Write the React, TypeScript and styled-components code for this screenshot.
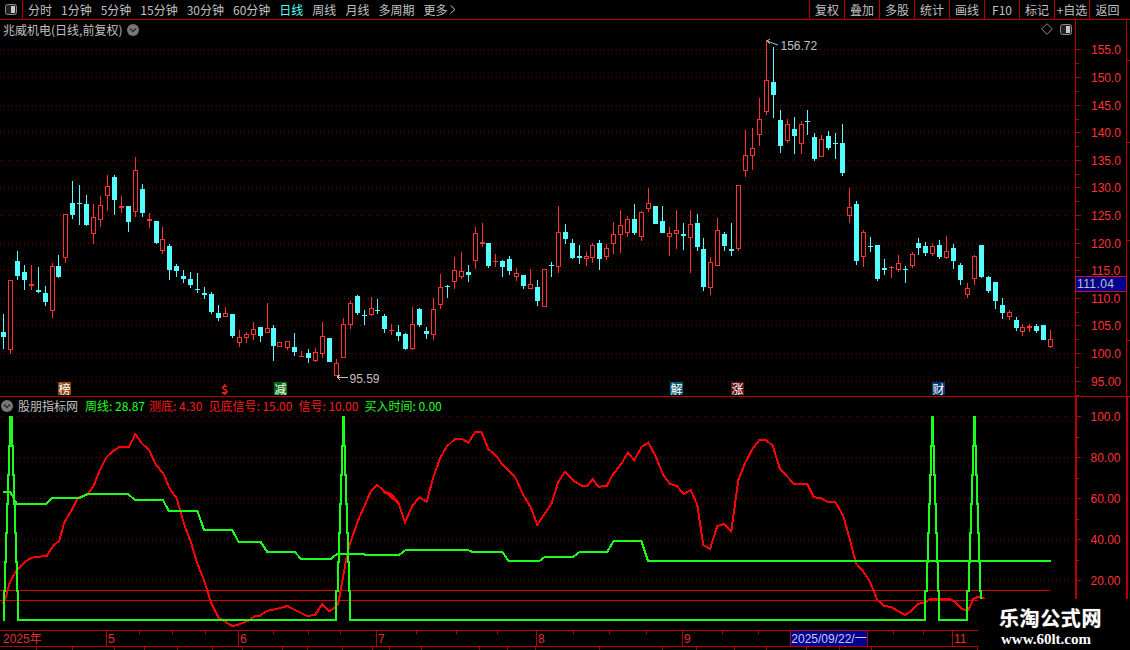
import React from "react";
import styled, { createGlobalStyle } from "styled-components";

const RED_LINE = "#b80000";
const CANDLE_RED = "#ff3232";
const CANDLE_CYAN = "#54ffff";
const GRID = "#6e0000";
const SANS = `"Liberation Sans", "Noto Sans CJK SC", sans-serif`;
const CJK = `"Noto Sans CJK SC", "Liberation Sans", sans-serif`;

const Global = createGlobalStyle`
  html, body { margin: 0; padding: 0; background: #000; }
  body { width: 1130px; height: 650px; overflow: hidden; font-family: ${CJK}; }
`;

const Page = styled.div`
  position: relative;
  width: 1130px;
  height: 650px;
  background: #000;
  display: flex;
  flex-direction: column;
  overflow: hidden;
`;

const Toolbar = styled.div`
  height: 19px;
  flex: none;
  display: flex;
  align-items: stretch;
  border-bottom: 1px solid ${RED_LINE};
  font: 12px/19px ${CJK};
  color: #c0c0c0;
`;
const ToggleCell = styled.div`
  width: 23px;
  flex: none;
  border-right: 1px solid ${RED_LINE};
  display: flex;
  align-items: center;
  justify-content: center;
  padding-right: 1px;
  box-sizing: border-box;
`;
const Periods = styled.div`
  display: flex;
  gap: 9px;
  padding-left: 5px;
  flex: 1;
`;
const Period = styled.span<{ $active?: boolean }>`
  color: ${(p) => (p.$active ? "#55ffff" : "#c0c0c0")};
  display: inline-flex;
  align-items: center;
  gap: 3px;
  white-space: nowrap;
`;
const Actions = styled.div`
  display: flex;
  flex: none;
`;
const Action = styled.div<{ $last?: boolean }>`
  width: ${(p) => (p.$last ? "41px" : "35px")};
  box-sizing: border-box;
  border-left: 1px solid ${RED_LINE};
  text-align: center;
  padding-right: ${(p) => (p.$last ? "5px" : "0")};
  white-space: nowrap;
`;

const UpperPane = styled.div`
  position: relative;
  height: 376px;
  flex: none;
  border-bottom: 1px solid ${RED_LINE};
`;
const LowerPane = styled.div`
  position: relative;
  height: 233px;
  flex: none;
`;
const Plot = styled.svg`
  display: block;
  width: 1130px;
  height: 100%;
  shape-rendering: crispEdges;
`;
const AxisText = styled.text`
  font: 12px ${SANS};
  fill: #ff3232;
`;
const NoteText = styled.text`
  font: 12px ${SANS};
  fill: #c0c0c0;
`;

const TitleBar = styled.div`
  position: absolute;
  left: 3px;
  top: 1px;
  height: 18px;
  display: flex;
  align-items: center;
  gap: 5px;
  font: 12px/18px ${CJK};
  color: #c0c0c0;
`;
const CornerTools = styled.div`
  position: absolute;
  right: 58px;
  top: 3px;
  display: flex;
  align-items: center;
  gap: 7px;
`;
const Legend = styled.div`
  position: absolute;
  left: 1px;
  top: 0;
  height: 17px;
  display: flex;
  align-items: center;
  font: 12px/17px ${CJK};
  white-space: nowrap;
`;
const LegendName = styled.span`
  color: #c0c0c0;
  margin: 0 7px 0 5px;
`;
const LegendItem = styled.span<{ $color: string; $gap: number }>`
  color: ${(p) => p.$color};
  margin-right: ${(p) => p.$gap}px;
`;
const Badge = styled.span<{ $left: number; $bg: string; $fg?: string; $bold?: boolean }>`
  position: absolute;
  left: ${(p) => p.$left}px;
  top: 362px;
  width: 13px;
  height: 13px;
  background: ${(p) => p.$bg};
  color: ${(p) => p.$fg ?? "#fff"};
  font: ${(p) => (p.$bold ? 700 : 400)} 12px/13px ${CJK};
  text-align: center;
`;

const TimeAxis = styled.div`
  position: relative;
  height: 15px;
  flex: none;
  display: flex;
  border-top: 1px solid ${RED_LINE};
  border-bottom: 1px solid ${RED_LINE};
  font: 12px/16px ${SANS};
  color: #e03030;
`;
const TimeCell = styled.div<{ $w: number; $first?: boolean; $plain?: boolean }>`
  width: ${(p) => p.$w}px;
  flex: none;
  box-sizing: border-box;
  padding-left: ${(p) => (p.$first ? 3 : 1)}px;
  border-left: ${(p) => (p.$first || p.$plain ? "none" : `1px solid ${RED_LINE}`)};
  font-family: ${SANS}, ${CJK};
`;
const DateCell = styled(TimeCell)`
  background: #000090;
  color: #c8c8e8;
  padding-left: 0;
  text-align: center;
  border-right: 1px solid ${RED_LINE};
  white-space: nowrap;
`;
const TickLayer = styled.svg`
  position: absolute;
  left: 0;
  top: 0;
  width: 978px;
  height: 3px;
  shape-rendering: crispEdges;
`;
const TabStrip = styled.div`
  height: 3px;
  flex: none;
  display: flex;
  overflow: hidden;
`;
const Tab = styled.div<{ $w: number }>`
  width: ${(p) => p.$w}px;
  flex: none;
  box-sizing: border-box;
  border-right: 1px solid ${RED_LINE};
`;
const Watermark = styled.div`
  position: absolute;
  left: 978px;
  top: 599px;
  width: 152px;
  height: 51px;
  background: #000;
  box-sizing: border-box;
  padding: 7px 0 0 21px;
  color: #fff;
`;
const MarkTitle = styled.div`
  font: 700 20px/24px ${CJK};
  letter-spacing: 0.6px;
  white-space: nowrap;
  text-shadow: 0 0 1px #aaa;
`;
const MarkUrl = styled.div`
  font: 700 15px/16px "Liberation Serif", serif;
  margin: 1px 0 0 2px;
  white-space: nowrap;
`;

type Row = [number, number, number, number, number, number];
const conv = (ox: number, oy: number, rows: Row[]) =>
  rows.map(([x, c, h, t, b, l]) => ({
    x: Math.floor(ox + x / 3),
    red: c === 1,
    h: Math.round(oy + h / 3),
    t: Math.round(oy + t / 3),
    b: Math.round(oy + b / 3),
    l: Math.round(oy + l / 3),
  }));

const candles = [
  ...conv(0, 150, [
    [10,0,492,546,561,597],[31,1,390,390,600,612],[52,0,303,333,378,390],[73,0,345,366,390,420],
    [94,1,345,402,408,420],[115,0,351,420,426,429],[136,0,408,429,456,468],[157,1,339,348,483,504],
    [175,0,315,348,381,384],[196,1,193,193,324,339],[217,0,93,159,195,207],[238,0,105,159,162,225],
    [259,0,135,162,225,228],[280,1,162,201,252,282],[301,1,138,165,210,231],[322,1,75,108,138,183],
    [343,0,75,81,150,195],[364,1,138,168,174,189],[385,0,168,168,216,246],[406,1,21,60,186,201],
    [427,0,102,117,189,201],[448,1,189,207,213,234],[469,0,213,213,279,282],[487,1,231,267,303,312],
    [508,0,282,288,360,390],[529,0,342,348,363,381],[550,0,360,378,387,399],[571,0,366,387,405,414],
    [592,0,369,417,420,429],[613,0,411,429,435,447],[634,0,426,432,486,492],[655,0,465,489,504,513],
    [676,1,471,489,501,501],[697,0,492,492,558,564],[718,1,540,561,579,591],[739,1,546,552,564,579],
    [760,1,516,537,555,570],[781,0,531,531,558,576],[802,1,459,534,549,549],[820,0,525,534,588,633],
    [838,1,576,576,591,591],
  ]),
  ...conv(280, 190, [
    [22,1,454,454,474,480],[43,0,429,471,486,498],[64,1,483,498,501,501],[85,0,477,489,504,519],
    [106,1,474,486,513,516],[127,1,396,438,491,504],[148,0,444,444,516,516],[169,1,507,519,558,558],
    [190,1,384,402,504,504],[211,1,333,339,405,417],[232,0,315,318,369,375],[253,0,360,375,378,405],
    [274,1,321,354,375,378],[292,0,327,360,363,372],[313,0,372,378,417,429],[334,1,402,420,423,435],
    [355,0,405,426,438,453],[376,0,429,432,477,480],[397,1,351,402,477,480],[418,0,354,357,405,411],
    [439,0,411,423,432,447],[460,1,324,357,435,450],[481,1,252,291,345,357],[502,0,285,288,291,324],
    [523,1,201,240,276,297],[544,1,186,243,261,267],[565,0,225,246,255,276],[586,1,111,129,213,237],
    [607,1,99,156,162,171],[625,0,159,159,228,234],[646,1,192,213,216,231],[667,0,210,213,231,261],
    [688,0,198,207,243,255],[709,1,234,249,261,273],[730,0,255,255,288,297],[751,1,237,282,297,297],
    [772,0,270,291,333,348],[793,1,237,237,351,351],[814,0,216,225,228,261],[835,1,48,126,231,249],
  ]),
  ...conv(560, 90, [
    [16,0,402,426,447,462],[37,0,447,459,504,507],[58,0,465,498,504,522],[79,1,486,498,507,528],
    [97,1,459,465,504,519],[118,0,450,459,507,540],[139,1,462,474,501,510],[160,1,396,432,462,492],
    [181,1,360,405,435,489],[202,1,378,387,429,441],[223,0,342,387,429,435],[244,1,363,366,441,453],
    [265,1,294,339,357,366],[286,0,348,348,402,402],[307,0,348,393,429,429],[328,1,411,429,441,498],
    [349,1,360,420,432,477],[370,0,399,432,438,480],[391,1,360,402,444,549],[412,0,372,399,471,483],
    [430,0,444,477,591,603],[451,1,501,516,594,615],[472,1,384,420,528,528],[493,0,426,432,468,483],
    [514,0,399,477,483,498],[535,1,285,285,477,483],[556,1,120,195,243,261],[577,1,114,174,198,240],
  ]),
  ...conv(750, 35, [
    [28,1,189,252,300,333],[49,1,15,135,231,240],[70,0,36,141,180,249],[91,0,225,255,333,354],
    [112,1,252,267,318,324],[133,0,246,282,303,357],[154,1,258,267,327,357],[172,0,225,258,261,300],
    [193,0,294,306,372,378],[214,1,300,312,366,366],[235,0,288,303,339,345],[256,0,294,324,327,372],
    [277,0,267,324,414,423],[298,1,459,516,543,564],
  ]),
  ...conv(830, 180, [
    [79,0,63,72,243,255],[100,1,150,156,231,261],[121,0,171,198,201,216],[142,0,195,195,297,303],
    [163,0,237,264,270,285],[184,1,258,261,264,294],[205,1,225,249,270,276],[226,0,258,267,270,309],
    [247,1,216,222,258,264],[265,0,174,189,204,225],[286,0,186,198,219,228],[307,1,192,198,222,228],
    [328,0,180,195,231,237],[349,1,168,213,234,237],[370,0,192,204,243,267],[391,0,249,255,300,315],
    [412,1,309,324,345,354],[433,1,225,228,297,315],[454,0,195,195,291,294],[475,0,288,291,333,339],
    [496,0,306,306,363,387],[517,0,354,375,399,417],[538,1,390,396,411,420],[559,0,411,420,444,453],
    [577,1,432,441,456,468],[598,1,432,438,444,456],[619,0,432,438,453,459],[640,0,435,435,480,480],
    [661,1,450,477,501,504],
  ]),
];

type Pt = [number, number];
const pts = (ox: number, oy: number, list: Pt[]) =>
  list.map(([x, y]) => `${(ox + x / 3).toFixed(1)},${(oy + y / 3).toFixed(1)}`).join(" ");

const redCurve = [
  pts(0, 400, [[8,612],[18,590],[30,545],[50,510],[75,485],[95,473],[115,470],[140,468],[160,437],[178,422],[192,370],[215,330],[235,292],[262,284],[280,260],[300,210],[320,170],[340,152],[360,140],[388,140],[406,102],[425,130],[447,150],[468,195],[490,220],[510,268],[530,295],[550,365],[572,425],[592,490],[612,540],[632,605],[655,652],[680,668],[698,679],[720,672],[745,662],[765,648],[780,647],[800,633],[825,628],[862,618],[885,630],[920,648],[945,645],[967,612],[988,634],[1005,622],[1015,610],[1040,470],[1050,430],[1075,360],[1112,275],[1132,255],[1155,276],[1175,283],[1195,310]]),
  pts(380, 400, [[0,262],[15,278],[35,283],[55,308],[75,367],[97,318],[118,292],[140,305],[160,232],[180,175],[200,140],[225,116],[245,116],[265,128],[285,97],[305,97],[325,147],[350,170],[370,197],[405,230],[430,285],[452,322],[472,375],[495,340],[515,310],[535,245],[555,216],[580,242],[605,257],[622,258],[638,237],[655,260],[680,258],[700,222],[725,190],[743,158],[763,180],[785,140],[805,128],[825,165],[850,225],[870,252],[890,258],[912,282],[932,270],[952,315],[970,435],[990,447],[1012,378],[1033,372],[1054,393],[1075,240],[1095,190],[1115,150]]),
  pts(730, 400, [[88,120],[108,120],[128,137],[150,207],[172,230],[192,252],[232,252],[252,292],[272,294],[292,305],[316,305],[340,348],[360,420],[378,490],[400,515],[420,545],[442,600],[462,617],[483,621],[525,645],[545,632],[565,612],[585,607],[600,598],[625,598],[660,597],[680,610],[695,627],[715,631],[730,597],[745,590],[765,597]]),
].join(" ");

const greenTrend = [
  pts(0, 400, [[10,275],[30,275],[50,311],[138,311],[158,293],[240,293],[262,282],[384,282],[404,299],[488,299],[506,332],[592,332],[612,389],[696,389],[716,426],[782,426],[802,456],[884,456],[904,477],[992,477],[1012,461],[1090,461],[1095,464]]),
  pts(380, 400, [[0,464],[58,464],[78,449],[262,449],[276,455],[366,455],[386,483],[478,483],[495,470],[580,470],[600,455],[682,455],[702,422],[784,422],[804,483]]),
  pts(730, 400, [[962,483]]),
].join(" ");

const LEVELS = [620, 590.7, 561.7, 533.3, 504, 475, 445.7, 416.7];
const LEFT = [-7, -5.7, -4.4, -3.4, -2.4, -1.4, -0.7];
const RIGHT = [1, 2, 3, 4, 5, 6, 7];
const spike = (c: number) => {
  const out: string[] = [];
  LEFT.forEach((o, i) => {
    out.push(`${c + o},${LEVELS[i]}`, `${c + o},${LEVELS[i + 1]}`);
  });
  RIGHT.forEach((o, i) => {
    out.push(`${c + o},${LEVELS[7 - i]}`, `${c + o},${LEVELS[6 - i]}`);
  });
  return out.join(" ");
};
const signal = `3,620 ${spike(10.5)} ${spike(343.3)} ${spike(932.3)} ${spike(974.3)}`;

const UPPER_LABELS: [string, number][] = [
  ["155.0", 49], ["150.0", 77], ["145.0", 105], ["140.0", 132], ["135.0", 160], ["130.0", 187],
  ["125.0", 215], ["120.0", 243], ["115.0", 270], ["110.0", 298], ["105.0", 325], ["100.0", 353], ["95.00", 381],
];
const LOWER_LABELS: [string, number][] = [
  ["100.0", 416], ["80.00", 457], ["60.00", 498], ["40.00", 539], ["20.00", 580],
];

const Candle = ({ x, red, h, t, b, l }: (typeof candles)[number]) => {
  const cx = x + 0.5;
  const color = red ? CANDLE_RED : CANDLE_CYAN;
  if (b - t <= 2) {
    return (
      <g stroke={color} fill="none">
        <path d={`M${cx} ${h}V${l}`} />
        <rect x={cx - 2.5} y={t} width={5} height={Math.max(b - t, 1)} fill={color} stroke="none" />
      </g>
    );
  }
  if (red) {
    return (
      <g stroke={color} fill="#000">
        <path d={`M${cx} ${h}V${t}M${cx} ${b}V${l}`} />
        <rect x={cx - 2} y={t + 0.5} width={4} height={b - t - 1} />
      </g>
    );
  }
  return (
    <g>
      <path d={`M${cx} ${h}V${l}`} stroke={color} />
      <rect x={cx - 2.5} y={t} width={5} height={b - t} fill={color} />
    </g>
  );
};

const PaneIcon = () => (
  <svg width="12" height="11" viewBox="0 0 12 11" style={{ display: "block" }}>
    <rect x="0.5" y="0.5" width="11" height="10" rx="2" fill="#222" stroke="#8a8a8a" />
    <rect x="6" y="2" width="4" height="7" fill="#c8c8c8" />
  </svg>
);
const Chevron = () => (
  <svg width="12" height="12" viewBox="0 0 12 12" style={{ display: "block", flex: "none" }}>
    <circle cx="6" cy="6" r="6" fill="#777" />
    <path d="M3 4.5 L6 7.5 L9 4.5" fill="none" stroke="#222" strokeWidth="1.2" />
  </svg>
);
const Diamond = () => (
  <svg width="12" height="12" viewBox="0 0 12 12" style={{ display: "block" }}>
    <path d="M6 .7 L11.3 6 L6 11.3 L.7 6 Z" fill="none" stroke="#8a8a8a" />
  </svg>
);
const More = () => (
  <svg width="6" height="9" viewBox="0 0 6 9" style={{ display: "block" }}>
    <path d="M.5 .5 L5 4.5 L.5 8.5" fill="none" stroke="#c0c0c0" />
  </svg>
);

const PERIODS = ["分时", "1分钟", "5分钟", "15分钟", "30分钟", "60分钟", "日线", "周线", "月线", "多周期"];
const ACTIONS = ["复权", "叠加", "多股", "统计", "画线", "F10", "标记", "+自选", "返回"];
const TICKS = [139, 172, 205, 273, 308, 340, 416, 456, 497, 573, 609, 646, 722, 758, 893, 923];
const TABS = [37, 36, 42, 30, 33, 35, 30, 40, 25, 35, 30, 17, 32, 58, 28, 28, 64, 63, 34, 38, 32, 40, 33, 32, 106];

export default function App() {
  return (
    <Page>
      <Global />
      <Toolbar>
        <ToggleCell><PaneIcon /></ToggleCell>
        <Periods>
          {PERIODS.map((p) => (
            <Period key={p} $active={p === "日线"}>{p}</Period>
          ))}
          <Period>更多<More /></Period>
        </Periods>
        <Actions>
          {ACTIONS.map((a, i) => (
            <Action key={a} $last={i === ACTIONS.length - 1}>{a}</Action>
          ))}
        </Actions>
      </Toolbar>

      <UpperPane>
        <Plot viewBox="0 20 1130 376">
          {UPPER_LABELS.map(([, y]) => (
            <path key={y} d={`M0 ${y + 0.5}H1075`} stroke={GRID} strokeDasharray="1 3" />
          ))}
          {candles.map((c, i) => (
            <Candle key={i} {...c} />
          ))}
          <path d="M1075.5 20V396M1126.5 20V396" stroke={RED_LINE} />
          {UPPER_LABELS.map(([label, y]) => (
            <g key={label}>
              <path d={`M1076 ${y + 0.5}H1081M1076 ${y + 14.5}H1079`} stroke={RED_LINE} />
              <AxisText x={1091} y={y + 5}>{label}</AxisText>
            </g>
          ))}
          <path d="M1126 60.5H1130M1126 142.5H1130M1126 240.5H1130M1126 340.5H1130" stroke={RED_LINE} />
          <rect x={1075.5} y={276.5} width={51} height={15} fill="#000090" stroke="#d01010" />
          <NoteText x={1077} y={288} letterSpacing={0.4}>111.04</NoteText>
          <path d="M767 41 L778 45 M767 41 L770 39 M767 41 L770 44" stroke="#c0c0c0" fill="none" shapeRendering="auto" />
          <NoteText x={780.5} y={50}>156.72</NoteText>
          <path d="M337 377H348 M337 377 L340 375 M337 377 L340 380" stroke="#c0c0c0" fill="none" />
          <NoteText x={349.5} y={383}>95.59</NoteText>
        </Plot>
        <TitleBar>
          兆威机电(日线,前复权)
          <Chevron />
        </TitleBar>
        <CornerTools>
          <Diamond />
          <PaneIcon />
        </CornerTools>
        <Badge $left={58} $bg="#8b4a10">榜</Badge>
        <Badge $left={218} $bg="transparent" $fg="#ff2020" $bold>$</Badge>
        <Badge $left={274} $bg="#006a10">减</Badge>
        <Badge $left={670} $bg="#005a70">解</Badge>
        <Badge $left={731} $bg="#601010">涨</Badge>
        <Badge $left={932} $bg="#003a70">财</Badge>
      </UpperPane>

      <LowerPane>
        <Plot viewBox="0 397 1130 233">
          {LOWER_LABELS.map(([, y]) => (
            <path key={y} d={`M0 ${y + 0.5}H1075`} stroke={GRID} strokeDasharray="1 3" />
          ))}
          <path d="M0 590.5H1050M0 600.5H1050" stroke="#e00000" />
          <polyline points={redCurve} fill="none" stroke="#ff0000" strokeWidth="2" />
          <polyline points={greenTrend} fill="none" stroke="#1cff1c" strokeWidth="2" />
          <polyline points={signal} fill="none" stroke="#1cff1c" strokeWidth="2" />
          <path d="M1076 397V630M1127 397V630" stroke={RED_LINE} strokeWidth="2" />
          {LOWER_LABELS.map(([label, y]) => (
            <g key={label}>
              <path d={`M1077 ${y + 0.5}H1081M1077 ${y + 21}H1079`} stroke={RED_LINE} />
              <AxisText x={1090.5} y={y + 5}>{label}</AxisText>
            </g>
          ))}
        </Plot>
        <Legend>
          <Chevron />
          <LegendName>股朋指标网</LegendName>
          <LegendItem $color="#22ff22" $gap={4}>周线: 28.87</LegendItem>
          <LegendItem $color="#ff1a1a" $gap={6}>测底: 4.30</LegendItem>
          <LegendItem $color="#ff1a1a" $gap={6}>见底信号: 15.00</LegendItem>
          <LegendItem $color="#ff1a1a" $gap={6}>信号: 10.00</LegendItem>
          <LegendItem $color="#22ff22" $gap={0}>买入时间: 0.00</LegendItem>
        </Legend>
      </LowerPane>

      <TimeAxis>
        <TimeCell $first $w={106}>2025年</TimeCell>
        <TimeCell $w={132}>5</TimeCell>
        <TimeCell $w={138}>6</TimeCell>
        <TimeCell $w={160}>7</TimeCell>
        <TimeCell $w={146}>8</TimeCell>
        <TimeCell $w={108}>9</TimeCell>
        <DateCell $w={78}>2025/09/22/一</DateCell>
        <TimeCell $w={84} $plain />
        <TimeCell $w={26}>11</TimeCell>
        <TickLayer>
          {TICKS.map((x) => (
            <path key={x} d={`M${x + 0.5} 0V3`} stroke={RED_LINE} />
          ))}
        </TickLayer>
      </TimeAxis>
      <TabStrip>
        {TABS.map((w, i) => (
          <Tab key={i} $w={w} />
        ))}
      </TabStrip>

      <Watermark>
        <MarkTitle>乐淘公式网</MarkTitle>
        <MarkUrl>www.60lt.com</MarkUrl>
      </Watermark>
    </Page>
  );
}
